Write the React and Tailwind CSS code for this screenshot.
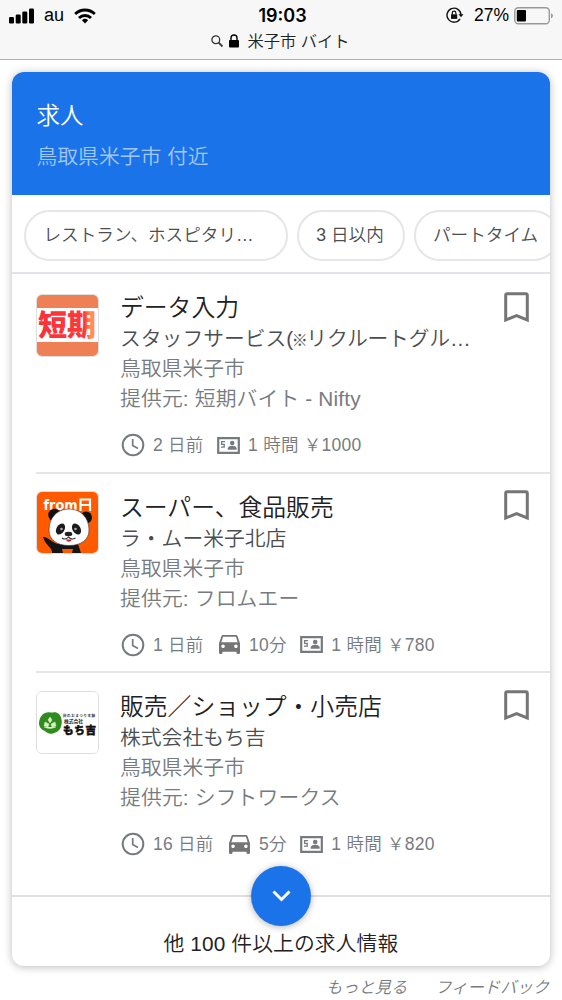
import React from "react";

const jobs = [
  {
    title: "データ入力",
    company: "スタッフサービス(※リクルートグル…",
    place: "鳥取県米子市",
    source: "提供元: 短期バイト - Nifty",
    posted: "2 日前",
    pay: "1 時間 ￥1000",
    Logo: TankiLogo,
  },
  {
    title: "スーパー、食品販売",
    company: "ラ・ムー米子北店",
    place: "鳥取県米子市",
    source: "提供元: フロムエー",
    posted: "1 日前",
    drive: "10分",
    pay: "1 時間 ￥780",
    Logo: PandaLogo,
  },
  {
    title: "販売／ショップ・小売店",
    company: "株式会社もち吉",
    place: "鳥取県米子市",
    source: "提供元: シフトワークス",
    posted: "16 日前",
    drive: "5分",
    pay: "1 時間 ￥820",
    Logo: MochiLogo,
  },
];

function TankiLogo() {
  return (
    <svg width="61" height="61" viewBox="0 0 61 61" className="bg-[#ef8056]">
      <defs>
        <linearGradient id="tanki" x1="0" x2="1">
          <stop offset="0" stopColor="#fb3038" />
          <stop offset="0.8" stopColor="#fb3a3a" />
          <stop offset="0.9" stopColor="#ff9052" />
        </linearGradient>
      </defs>
      <path d="M0 13h61v34H0z" fill="#fff" />
      <text
        x="1"
        y="41"
        fontSize="29"
        fontWeight="900"
        textLength="58"
        fill="url(#tanki)"
      >
        短期
      </text>
    </svg>
  );
}

function PandaLogo() {
  return (
    <svg width="61" height="61" viewBox="0 0 61 61" className="bg-[#ff5a00]">
      <text
        x="6.500"
        y="18"
        fontSize="14"
        fontWeight="700"
        fill="#fff"
        fontFamily="DejaVu Sans"
        textLength="34"
        lengthAdjust="spacingAndGlyphs"
      >
        from
      </text>
      <path d="M43.500 19V7.500H53V19M43.500 13H53" fill="none" stroke="#fff" strokeWidth="2.200" />
      <circle cx="17.500" cy="23" r="6.300" fill="#111" />
      <circle cx="49" cy="25.500" r="6" fill="#111" />
      <path d="M6 45c4-1 8 5 15 7h20l3 9H15c1-5-7-8-9-16z" fill="#151515" />
      <path
        d="M32 17c13 0 20 10 20 21 0 10-8 15.500-20 15.500S12 48 12 38c0-11 7-21 20-21z"
        fill="#fff"
        stroke="#333"
        strokeWidth=".6"
      />
      <path d="M25 57l1 4h9l1-4z" fill="#ff5a00" />
      <ellipse cx="23.500" cy="37" rx="4" ry="6" transform="rotate(30 23.5 37)" fill="#1b1b1b" />
      <ellipse cx="39.500" cy="37" rx="4" ry="6" transform="rotate(-30 39.5 37)" fill="#1b1b1b" />
      <circle cx="24.500" cy="37" r="1.300" fill="#aaa" />
      <circle cx="38.500" cy="37" r="1.300" fill="#aaa" />
      <ellipse cx="31.500" cy="42" rx="3.800" ry="2.200" fill="#222" />
      <path d="M25 46q3.500 2.500 6.500-1q3.500 3.500 7 1" fill="none" stroke="#333" strokeWidth="1.100" />
      <path d="M28.500 47.500h6.500q-3 4.500-6.500 0z" fill="#c92127" />
    </svg>
  );
}

function MochiLogo() {
  return (
    <svg width="61" height="61" viewBox="0 0 61 61" className="bg-white">
      <path
        d="M8 21c3-1.500 6-.5 8-.500 4-1 7 2 8 5 1 3 1 6 0 9-1 4-5 6-8 7-4 1-6-1-9-3-3-1-5-4-5-7 0-4 2-9 6-10.500z"
        fill="#2f8b1c"
      />
      <path
        d="M13 25l2 3-2 3-2-3zM8 30l4 2-1 3-4-1zM18 30l-4 2 1 3 4-1zM7 35q6 3 12 0"
        fill="#d9efc4"
        stroke="#d9efc4"
        strokeWidth=".5"
      />
      <text x="26" y="24.500" fontSize="3.500" fontWeight="700" textLength="32" fill="#333">
        餅のおまつり本舗
      </text>
      <text x="27" y="31" fontSize="4.800" fontWeight="700" textLength="19" fill="#222">
        株式会社
      </text>
      <text
        x="26"
        y="41.500"
        fontSize="10.500"
        fontWeight="900"
        textLength="33"
        fill="#111"
        stroke="#111"
        strokeWidth=".5"
      >
        もち吉
      </text>
    </svg>
  );
}

function ClockIcon() {
  return (
    <svg width="24" height="24" viewBox="0 0 24 24" fill="none" stroke="#767b80" strokeWidth="2">
      <circle cx="12" cy="12" r="10.300" />
      <path d="M11.700 6v6.400l5.300 3.200" strokeWidth="1.700" />
    </svg>
  );
}

function CarIcon() {
  return (
    <svg width="21" height="19" viewBox="3 4 18 16" preserveAspectRatio="none" fill="#757575">
      <path d="M18.920 5.010C18.720 4.420 18.160 4 17.500 4h-11c-.66 0-1.210.42-1.420 1.010L3 11v8c0 .55.45 1 1 1h1c.55 0 1-.45 1-1v-1h12v1c0 .55.45 1 1 1h1c.55 0 1-.45 1-1v-8l-2.080-5.990zM6.500 15c-.83 0-1.500-.67-1.500-1.500S5.670 12 6.500 12s1.500.67 1.500 1.500S7.330 15 6.500 15zm11 0c-.83 0-1.500-.67-1.500-1.500s.67-1.500 1.500-1.500 1.500.67 1.500 1.500-.67 1.500-1.500 1.500zM5 10l1.500-4.500h11L19 10H5z" />
    </svg>
  );
}

function PayIcon() {
  return (
    <svg width="23" height="17" viewBox="0 0 23 17" fill="none" stroke="#767b80">
      <path d="M1.200 1.200h20.600v14.600H1.200z" strokeWidth="2.200" />
      <path d="M8 4.600H4.600v2.700H7.200v2.900H4" strokeWidth="1.300" />
      <circle cx="15.200" cy="6" r="2.300" fill="#767b80" stroke="none" />
      <path d="M10.800 12.800V11.300c0-1.700 2.500-2.500 4.400-2.500s4.400.8 4.400 2.500v1.500z" fill="#767b80" stroke="none" />
    </svg>
  );
}

function BookmarkIcon() {
  return (
    <svg width="25" height="31" viewBox="0 0 25 31" fill="none" stroke="#757575" strokeWidth="3">
      <path d="M1.700 28V3.200q0-1.500 1.500-1.500h18.600q1.500 0 1.500 1.500V28L12.500 23.600z" />
    </svg>
  );
}

function StatusBar() {
  return (
    <header className="relative z-10 h-[60px] border-b border-[#b2b2b2] bg-[#f7f7f7] text-black">
      <div className="grid h-[30px] grid-cols-3 items-center pt-px">
        <div className="flex items-center pl-[9px]">
          <svg width="25" height="16" viewBox="0 0 25 16">
            <rect x="0" y="9" width="5" height="6.500" rx="1.300" />
            <rect x="6.700" y="6.500" width="5" height="9" rx="1.300" />
            <rect x="13.300" y="3.500" width="5" height="12" rx="1.300" />
            <rect x="20" y="0.500" width="5" height="15" rx="1.300" />
          </svg>
          <span className="ml-[10px] text-[18px]">au</span>
          <svg className="ml-[10px]" width="22" height="16" viewBox="0 0 22 16" fill="none" stroke="#000" strokeWidth="2.800">
            <path d="M1.200 6a14 14 0 0 1 19.600 0" />
            <path d="M5 10a8.500 8.500 0 0 1 12 0" />
            <path d="M11 15.500L7.900 12.300a4.500 4.500 0 0 1 6.200 0z" fill="#000" stroke="none" />
          </svg>
        </div>
        <div className="pl-[3px] text-center font-[Inter] text-[18px] font-semibold">19:03</div>
        <div className="flex items-center justify-end pr-[8px]">
          <svg width="18" height="17" viewBox="0 0 18 17" fill="none" stroke="#111" strokeWidth="1.400">
            <path d="M14 11.800A7 7 0 1 1 15 8" />
            <path d="M12.500 7.300h5L15 10.300z" fill="#111" stroke="none" />
            <rect x="5" y="7.300" width="6.200" height="4.600" fill="#111" stroke="none" />
            <path d="M6.300 7.500V6a1.800 1.800 0 0 1 3.600 0v1.500" strokeWidth="1.200" />
          </svg>
          <span className="ml-[10px] text-[17.500px]">27%</span>
          <svg className="ml-[5px]" width="40" height="18" viewBox="0 0 40 18">
            <rect x=".8" y=".8" width="34.500" height="16" rx="3.500" fill="none" stroke="#999" strokeWidth="1.400" />
            <rect x="2.800" y="3" width="9.200" height="11.600" rx="1" />
            <path d="M37 6.200q2 .7 2 2.600t-2 2.600z" fill="#999" />
          </svg>
        </div>
      </div>
      <div className="flex h-[22px] items-center justify-center pr-px text-[16.300px] leading-[22px] text-[#222]">
        <svg width="12" height="12" viewBox="0 0 12 12" fill="none" stroke="#333" strokeWidth="1.300">
          <circle cx="4.800" cy="4.800" r="3.900" />
          <path d="M7.700 7.700l3.800 3.800" strokeWidth="1.800" />
        </svg>
        <svg className="ml-[6px]" width="10" height="14" viewBox="0 0 10 14">
          <rect y="6" width="10" height="7.500" rx="1" />
          <path d="M2 6.500V4a3 3 0 0 1 6 0v2.500" fill="none" stroke="#000" strokeWidth="1.400" />
        </svg>
        <span className="ml-[8px] pb-px">米子市 バイト</span>
      </div>
    </header>
  );
}

function Chip({ children, className }) {
  return (
    <div
      className={`flex h-[51px] shrink-0 items-center whitespace-nowrap rounded-full border-2 border-[#e5e6ea] text-[17.600px] text-[#4a4e52] ${className}`}
    >
      {children}
    </div>
  );
}

function JobCard({ job, first, last }) {
  const { Logo } = job;
  const [before, after] = job.company.split("※");
  return (
    <div className={`ml-[24px] flex h-[199.5px] ${last ? "" : "border-b-2 border-[#e6e6e6]"}`}>
      <div
        className={`h-[63px] w-[63px] shrink-0 overflow-hidden rounded-[6px] border border-[#dedede] ${first ? "mt-[20px]" : "mt-[17.5px]"}`}
      >
        <Logo />
      </div>
      <div className="ml-[21px] flex-1 whitespace-nowrap pt-[18px]">
        <div className="h-[32px] text-[23.800px] leading-[31px] text-[#212124]">{job.title}</div>
        <div className="h-[30px] text-[20.800px] leading-[30px] text-[#4a4e52]">
          {before}
          {after && (
            <>
              <span className="mx-[-1.5px] text-[16px] font-medium">※</span>
              <span className="tracking-[-0.2px]">{after}</span>
            </>
          )}
        </div>
        <div className="h-[30px] text-[20.800px] leading-[30px] text-[#767b80]">{job.place}</div>
        <div className="h-[30px] text-[20.800px] leading-[30px] tracking-[0.15px] text-[#767b80]">{job.source}</div>
        <div className="mt-[16px] ml-px flex h-[30px] items-center text-[17.500px] leading-[30px] tracking-[0.25px] text-[#767b80]">
          <ClockIcon />
          <span className="ml-[8px]">{job.posted}</span>
          {job.drive && (
            <>
              <span className="ml-[15px]">
                <CarIcon />
              </span>
              <span className="ml-[9.5px]">{job.drive}</span>
            </>
          )}
          <span className="ml-[13.5px]">
            <PayIcon />
          </span>
          <span className="ml-[8px]">{job.pay}</span>
        </div>
      </div>
      <div className={`mr-[21px] ${first ? "mt-[18px]" : "mt-[16.5px]"}`}>
        <BookmarkIcon />
      </div>
    </div>
  );
}

export default function App() {
  return (
    <div
      lang="ja"
      className="h-[1000px] w-[562px] overflow-hidden bg-white font-['Liberation_Sans','Noto_Sans_CJK_JP',sans-serif] font-[350]"
    >
      <StatusBar />

      <main className="mx-[12px] mt-[12px] h-[893.5px] rounded-[12px] bg-white shadow-[0_1px_9px_rgba(0,0,0,0.27)]">
        <div className="h-[123px] rounded-t-[12px] bg-[#1a73e8] pl-[24.5px] pt-[27px]">
          <h1 className="text-[23.500px] leading-[34px] text-white">求人</h1>
          <p className="mt-[8.5px] text-[20.800px] leading-[30px] text-[#a3c7f6]">鳥取県米子市 付近</p>
        </div>

        {/* Filter chips, the last one runs off the card */}
        <div className="flex h-[79px] gap-[9px] overflow-hidden border-b-2 border-[#e2e3e8] pl-[12px] pt-[15px]">
          <Chip className="w-[264px] pl-[17.5px]">レストラン、ホスピタリ…</Chip>
          <Chip className="w-[108px] justify-center pr-[2px]">3 日以内</Chip>
          <Chip className="w-[145px] pl-[17px]">パートタイム</Chip>
        </div>

        {jobs.map((job, i) => (
          <JobCard key={job.title} job={job} first={i === 0} last={i === jobs.length - 1} />
        ))}

        <div className="relative mt-[22px] h-[70px] border-t-2 border-[#dfdfdf] pt-[30px] text-center text-[20.800px] leading-[34px] tracking-[0.1px] text-[#212124]">
          <button className="absolute left-1/2 top-[-31px] flex h-[60px] w-[60px] -translate-x-1/2 items-center justify-center rounded-full bg-[#1a73e8] shadow-[0_1px_7px_rgba(0,0,0,0.3)]">
            <svg width="19" height="12" viewBox="0 0 19 12" fill="none" stroke="#fff" strokeWidth="3">
              <path d="M1.500 1.500l8 8 8-8" />
            </svg>
          </button>
          他 100 件以上の求人情報
        </div>
      </main>

      <footer className="flex h-[34px] justify-end gap-[28px] pr-[13px] pt-[9px] text-[16.300px] italic leading-[25px] text-[#767b80]">
        <span>もっと見る</span>
        <span>フィードバック</span>
      </footer>
    </div>
  );
}
